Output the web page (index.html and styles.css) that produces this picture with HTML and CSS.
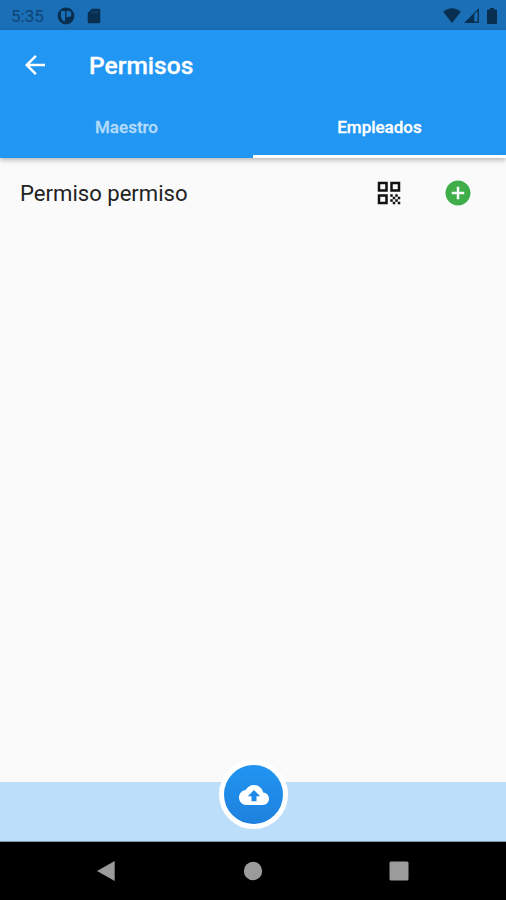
FILE: index.html
```html
<!DOCTYPE html>
<html lang="es">
<head>
  <meta charset="UTF-8">
  <meta name="viewport" content="width=device-width, initial-scale=1.0">
  <title>Permisos</title>
  <link rel="stylesheet" href="styles.css">
</head>
<body>
  <div class="app">
    <div class="status-bar">
      <span class="clock">5:35</span>
      <svg class="status-app" viewBox="0 0 18 18" width="18" height="18">
        <circle cx="9" cy="9" r="8.4" />
        <path class="cutout" d="M4 4h4v10.500C5.400 13.800 4 11.800 4 9zM9.400 4h2a3 3 0 0 1 0 6h-2z" />
      </svg>
      <svg class="status-sd" viewBox="0 0 14 16" width="14" height="16">
        <path d="M5 .8h7a1.300 1.300 0 0 1 1.300 1.300v11.800a1.300 1.300 0 0 1-1.300 1.300H2a1.300 1.300 0 0 1-1.300-1.300V5z" />
        <path class="cutout slots" d="M4.600 3.300h1.300v2H4.600zM7 3.300h1.300v2H7zM9.400 3.300h1.300v2H9.400z" />
      </svg>
      <div class="status-right">
        <svg viewBox="0 0 18 15" width="18" height="15">
          <path d="M9 15 .3 3.900C5.200-.9 12.800-.9 17.700 3.900z" />
        </svg>
        <svg viewBox="0 0 15 15" width="15" height="15">
          <path fill-rule="evenodd" d="M0 15 15 0v15zM10.300 6.300v7.300h3.300V3z" />
        </svg>
        <svg viewBox="0 0 10 16" width="10" height="16">
          <path d="M3 0h4v1.600h1.800a1.200 1.200 0 0 1 1.200 1.200v12a1.200 1.200 0 0 1-1.200 1.200H1.200A1.200 1.200 0 0 1 0 14.800v-12a1.200 1.200 0 0 1 1.200-1.200H3z" />
        </svg>
      </div>
    </div>

    <header class="header">
      <div class="toolbar">
        <button class="back-btn" aria-label="Volver">
          <svg viewBox="0 0 24 24" width="30" height="30">
            <path d="M20 11H7.830l5.590-5.590L12 4l-8 8 8 8 1.410-1.410L7.830 13H20v-2z" />
          </svg>
        </button>
        <h1>Permisos</h1>
      </div>
      <nav class="tabs">
        <button class="tab">Maestro</button>
        <button class="tab active">Empleados</button>
      </nav>
    </header>

    <main class="content">
      <div class="row">
        <span class="row-name">Permiso permiso</span>
        <button class="qr-btn" aria-label="QR">
          <svg viewBox="0 0 24 24" width="30" height="30">
            <path d="M3 11h8V3H3v8zm2-6h4v4H5V5zM3 21h8v-8H3v8zm2-6h4v4H5v-4zM13 3v8h8V3h-8zm6 6h-4V5h4v4zM19 19h2v2h-2zM13 13h2v2h-2zM15 15h2v2h-2zM13 17h2v2h-2zM15 19h2v2h-2zM17 17h2v2h-2zM17 13h2v2h-2zM19 15h2v2h-2z" />
          </svg>
        </button>
        <button class="add-btn" aria-label="Agregar">
          <svg viewBox="0 0 24 24" width="30" height="30">
            <path d="M12 2C6.480 2 2 6.480 2 12s4.480 10 10 10 10-4.480 10-10S17.520 2 12 2zm5 11h-4v4h-2v-4H7v-2h4V7h2v4h4v2z" />
          </svg>
        </button>
      </div>
    </main>

    <footer class="bottom-bar">
      <button class="upload-btn" aria-label="Subir">
        <svg viewBox="0 0 24 24" width="30" height="30">
          <path d="M19.350 10.040C18.670 6.590 15.640 4 12 4 9.110 4 6.600 5.640 5.350 8.040 2.340 8.360 0 10.910 0 14c0 3.310 2.690 6 6 6h13c2.760 0 5-2.240 5-5 0-2.640-2.050-4.780-4.650-4.960zM14 13v4h-4v-4H7l5-5 5 5h-3z" />
        </svg>
      </button>
    </footer>

    <div class="nav-bar">
      <svg viewBox="0 0 20 22" width="20" height="22">
        <path d="M18.700 1v20L1 11z" />
      </svg>
      <svg viewBox="0 0 20 20" width="20" height="20">
        <circle cx="10" cy="10" r="9.200" />
      </svg>
      <svg viewBox="0 0 20 20" width="20" height="20">
        <rect x=".5" y=".5" width="19" height="19" rx="1.500" />
      </svg>
    </div>
  </div>
</body>
</html>
```
FILE: styles.css
```css
* {
  box-sizing: border-box;
}

body {
  margin: 0;
  font-family: Roboto, sans-serif;
}

button {
  padding: 0;
  border: none;
  background: none;
  font-family: inherit;
  cursor: pointer;
}

svg {
  display: block;
  fill: currentColor;
}

.app {
  display: flex;
  flex-direction: column;
  height: 100vh;
  overflow: hidden;
  background-color: #fafafa;
}

.status-bar {
  display: flex;
  align-items: center;
  height: 30px;
  padding: 1px 9px 0 11px;
  background-color: #1a6fb7;
  color: #082f50;
}
.clock {
  width: 46px;
  font-size: 17px;
  color: #0f4474;
}
.cutout {
  fill: #1a6fb7;
}
.slots {
  opacity: .5;
}
.status-sd {
  margin-left: 12px;
}
.status-right {
  display: flex;
  align-items: center;
  margin-left: auto;
}
.status-right svg:nth-child(2) {
  margin: 0 8px 0 3px;
}

.header {
  position: relative;
  background-color: #2196f3;
  color: white;
  box-shadow: 0 2px 5px rgba(0, 0, 0, .28);
}
.toolbar {
  display: flex;
  align-items: center;
  height: 69px;
  padding-left: 20px;
}
.back-btn {
  width: 69px;
  color: white;
}
h1 {
  margin: 1px 0 0;
  font-size: 24.6px;
  font-weight: 500;
  -webkit-text-stroke: .3px;
}
.tabs {
  display: flex;
  height: 59px;
}
.tab {
  flex: 1;
  border-bottom: 3px solid transparent;
  font-size: 17px;
  font-weight: 500;
  color: #b5dbfb;
  -webkit-text-stroke: .3px;
}
.tab.active {
  border-bottom-color: white;
  color: white;
}

.content {
  flex: 1;
}
.row {
  display: flex;
  align-items: center;
  height: 69px;
  padding: 0 33px 0 20px;
}
.row-name {
  flex: 1;
  padding-top: 1px;
  font-size: 22.1px;
  color: #222;
}
.qr-btn {
  margin-right: 39px;
  color: #111;
}
.add-btn {
  color: #3fae49;
}

.bottom-bar {
  position: relative;
  height: 60px;
  background-color: #bbdefb;
  border-bottom: 1px solid #7d97ac;
}
/* sits over the top edge of the bar */
.upload-btn {
  position: absolute;
  top: -22px;
  left: 50%;
  display: flex;
  align-items: center;
  justify-content: center;
  width: 69px;
  height: 69px;
  margin-left: -34px;
  border: 5px solid white;
  border-radius: 50%;
  background: linear-gradient(#2196f3, #1e80dc) border-box;
  color: white;
}

.nav-bar {
  display: flex;
  align-items: center;
  justify-content: space-between;
  height: 58px;
  padding: 0 97px 0 96px;
  background-color: black;
  color: #9b9b9b;
}
```
